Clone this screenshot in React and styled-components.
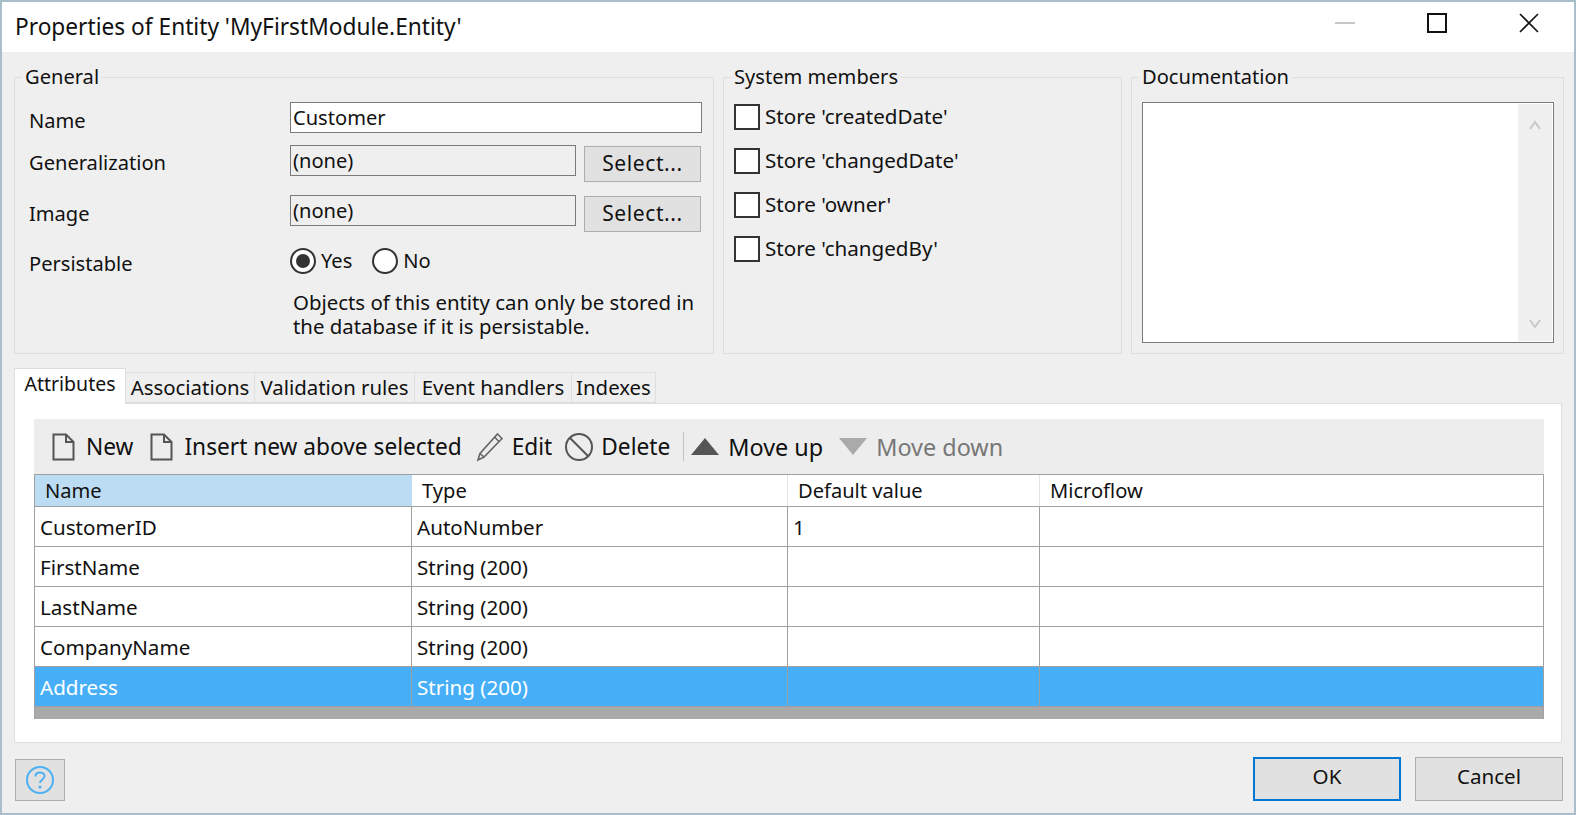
import React from 'react';
import styled, { createGlobalStyle } from 'styled-components';

const Global = createGlobalStyle`
  html, body { margin: 0; padding: 0; background: #efefef; }
  * { box-sizing: border-box; }
`;
const FONT = `"Noto Sans", "Open Sans", sans-serif`;

const Window = styled.div`
  width: 1576px; height: 815px; overflow: hidden;
  border: 2px solid #a9bfcc;
  background: #efefef;
  font-family: ${FONT};
  font-size: 20.1px;
  color: #111;
  display: flex; flex-direction: column;
`;
const TitleBar = styled.header`
  height: 50px; flex: none; background: #fff;
  display: flex; align-items: center; padding-left: 13px;
`;
const Title = styled.h1`
  margin: 0; font-size: 22.7px; font-weight: 400; flex: 1; line-height: 46px;
`;
const WinButtons = styled.div`
  display: flex; align-items: center; padding-right: 35px; gap: 72px; margin-bottom: 8px;
  svg { display: block; }
`;
const Groups = styled.div`
  display: flex; gap: 9px; padding: 13px 10px 0 12px; height: 316px; flex: none;
`;
const Group = styled.fieldset`
  margin: 0; padding: 0; min-width: 0;
  width: ${p => p.$w}px; height: 289px; flex: none;
  border: 1px solid #dedede;
`;
const Legend = styled.legend`
  padding: 0 3px; margin-left: 7px; line-height: 23px; height: 24px;
`;
const FormBody = styled.div`padding: 13px 0 0 14px;`;
const Row = styled.div`
  display: flex; align-items: flex-start; height: ${p => p.$h}px;
`;
const Label = styled.label`
  width: 261px; flex: none; line-height: 24px; padding-top: ${p => p.$top}px;
`;
const TextBox = styled.div`
  width: ${p => p.$w}px; height: 31px; flex: none;
  border: 1px solid #7a7a7a;
  background: ${p => (p.$readonly ? '#efefef' : '#fff')};
  padding-left: 2px; line-height: 29px;
`;
const SmallButton = styled.button`
  margin: 1px 0 0 8px; width: 117px; height: 36px; padding: 0 0 2px;
  border: 1px solid #adadad; background: #e1e1e1;
  font: inherit; font-size: 21px; letter-spacing: 0.6px; color: inherit;
`;
const RadioRow = styled.div`display: flex; align-items: center; height: 26px; line-height: 22px;`;
const RadioCircle = styled.span`
  width: 26px; height: 26px; flex: none; border-radius: 50%;
  border: 2px solid #333; background: #fff;
  display: flex; align-items: center; justify-content: center;
  &::after {
    content: ''; width: 14px; height: 14px; border-radius: 50%;
    background: ${p => (p.$on ? '#333' : 'transparent')};
  }
`;
const RadioText = styled.span`margin: 0 ${p => p.$after}px 0 5px;`;
const Help = styled.p`
  margin: 16px 0 0 264px; line-height: 24px; width: 420px; font-size: 20.4px;
`;
const CheckList = styled.div`
  display: flex; flex-direction: column; gap: 18px; padding: 15px 0 0 10px; font-size: 20.6px;
`;
const CheckRow = styled.div`display: flex; align-items: center; height: 26px; gap: 5px; line-height: 22px;`;
const CheckLabel = styled.span`padding-bottom: 3px;`;
const CheckBox = styled.span`
  width: 26px; height: 26px; flex: none; border: 2px solid #333; background: #fff;
`;
const DocBox = styled.div`
  margin: 13px 0 0 10px; width: 412px; height: 241px;
  border: 1px solid #7a7a7a; background: #fff;
  display: flex; justify-content: flex-end; padding: 1px;
`;
const ScrollTrack = styled.div`
  width: 34px; background: #f0f0f0;
  display: flex; flex-direction: column; justify-content: space-between; align-items: center;
  padding: 16px 0 12px;
`;
const TabStrip = styled.div`
  display: flex; align-items: flex-end; margin: 0 0 0 12px; height: 35px; flex: none;
  position: relative; z-index: 1; font-size: 20.6px;
`;
const Tab = styled.div`
  width: ${p => p.$w}px; flex: none;
  height: ${p => (p.$active ? 36 : 31)}px;
  margin-bottom: ${p => (p.$active ? -1 : 0)}px;
  background: ${p => (p.$active ? '#fff' : '#efefef')};
  border: 1px solid #dedede;
  border-left-width: ${p => (p.$active ? 1 : 0)}px;
  border-bottom-width: ${p => (p.$active ? 0 : 1)}px;
  text-align: center; line-height: 29px;
  font-size: ${p => (p.$active ? 19.5 : 20.4)}px;
  white-space: nowrap;
`;
const Panel = styled.section`
  margin: 0 0 0 12px; width: 1548px; height: 340px; flex: none;
  background: #fff; border: 1px solid #dedede;
  padding: 15px 17px 0 19px;
`;
const Toolbar = styled.div`
  height: 55px; background: #ededed; display: flex; align-items: center;
  font-size: 22.7px; padding-left: 18px;
  svg { display: block; flex: none; }
`;
const ToolItem = styled.div`
  display: flex; align-items: center; gap: ${p => p.$gap ?? 11}px;
  margin-right: ${p => p.$after ?? 14}px; white-space: nowrap;
  font-size: ${p => p.$size ?? 22.7}px;
  color: ${p => (p.$disabled ? '#777' : '#111')};
`;
const ToolSep = styled.span`width: 1px; height: 29px; background: #c4c4c4; margin-right: 7px;`;
const Table = styled.div`
  width: 1510px; border-top: 1px solid #a0a0a0; border-left: 1px solid #a0a0a0; border-right: 1px solid #a0a0a0;
  background: #a9a9a9; height: 245px; font-size: 20.6px;
`;
const HeaderRow = styled.div`display: flex; height: 32px; background: #fff; border-bottom: 1px solid #a0a0a0; font-size: 20.1px;`;
const HeaderCell = styled.div`
  width: ${p => p.$w}px; flex: none; padding-left: 10px; line-height: 32px;
  background: ${p => (p.$sorted ? '#bcdcf3' : 'transparent')};
  border-right: 1px solid ${p => (p.$sorted ? 'transparent' : '#e5e5e5')};
  &:last-child { border-right: none; }
`;
const DataRow = styled.div`
  display: flex; height: 40px;
  background: ${p => (p.$selected ? '#47aff8' : '#fff')};
  color: ${p => (p.$selected ? '#fff' : '#111')};
  border-bottom: 1px solid #a0a0a0;
`;
const Cell = styled.div`
  width: ${p => p.$w}px; flex: none; padding-left: 5px; line-height: 41px;
  border-right: 1px solid #a0a0a0;
  &:last-child { border-right: none; }
`;
const Footer = styled.footer`
  flex: 1; display: flex; align-items: flex-start; padding: 14px 11px 0 13px; font-size: 20.6px;
`;
const HelpButton = styled.button`
  width: 50px; height: 42px; margin-top: 2px; padding: 0;
  border: 1px solid #adadad; background: #e1e1e1;
  display: flex; align-items: center; justify-content: center;
`;
const Spacer = styled.div`flex: 1;`;
const DialogButton = styled.button`
  width: 148px; height: 44px; padding: 0 0 6px; margin-left: ${p => p.$ml}px;
  background: #e1e1e1; font: inherit; color: inherit;
  border: ${p => (p.$default ? '2px solid #0078d7' : '1px solid #adadad')};
`;

const COLS = [377, 376, 252, 503];
const ROWS = [
  ['CustomerID', 'AutoNumber', '1', ''],
  ['FirstName', 'String (200)', '', ''],
  ['LastName', 'String (200)', '', ''],
  ['CompanyName', 'String (200)', '', ''],
  ['Address', 'String (200)', '', ''],
];
const TABS = [['Attributes', 112], ['Associations', 129], ['Validation rules', 160], ['Event handlers', 157], ['Indexes', 84]];

const DocIcon = () => (
  <svg width="23" height="28" viewBox="0 0 23 28" fill="none" stroke="#555" strokeWidth="2">
    <path d="M1.5 1.5H14L21.5 9V26.5H1.5Z" />
    <path d="M14 1.5V9H21.5" />
  </svg>
);
const PenIcon = () => (
  <svg width="28" height="30" viewBox="0 0 28 30" fill="none" stroke="#666" strokeWidth="1.6">
    <path d="M21.5 2L26 6.5L8 25L2 28L4 21.5Z" />
    <path d="M4 21.5L8 25M18.5 5L23 9.5" />
  </svg>
);
const BanIcon = () => (
  <svg width="28" height="28" viewBox="0 0 28 28" fill="none" stroke="#555" strokeWidth="2">
    <circle cx="14" cy="14" r="13" />
    <path d="M5 5L23 23" />
  </svg>
);
const TriUp = () => (
  <svg width="28" height="17" viewBox="0 0 28 17"><path d="M14 0L28 17H0Z" fill="#555" /></svg>
);
const TriDown = () => (
  <svg width="28" height="17" viewBox="0 0 28 17"><path d="M0 0H28L14 17Z" fill="#aaa" /></svg>
);
const Chevron = ({ down }) => (
  <svg width="12" height="10" viewBox="0 0 12 10" fill="none" stroke="#c8c8c8" strokeWidth="2">
    <path d={down ? 'M1 1L6 8L11 1' : 'M1 9L6 2L11 9'} />
  </svg>
);

export default function App() {
  return (
    <>
      <Global />
      <Window>
        <TitleBar>
          <Title>Properties of Entity 'MyFirstModule.Entity'</Title>
          <WinButtons>
            <svg width="20" height="20" viewBox="0 0 20 20"><path d="M0 10H20" stroke="#c8c8c8" strokeWidth="2" /></svg>
            <svg width="20" height="20" viewBox="0 0 20 20"><rect x="1" y="1" width="18" height="18" fill="none" stroke="#111" strokeWidth="2" /></svg>
            <svg width="20" height="20" viewBox="0 0 20 20"><path d="M1 1L19 19M19 1L1 19" stroke="#111" strokeWidth="1.6" /></svg>
          </WinButtons>
        </TitleBar>

        <Groups>
          <Group $w={700}>
            <Legend>General</Legend>
            <FormBody>
              <Row $h={43}>
                <Label $top={7}>Name</Label>
                <TextBox $w={412}>Customer</TextBox>
              </Row>
              <Row $h={50}>
                <Label $top={6}>Generalization</Label>
                <TextBox $w={286} $readonly>(none)</TextBox>
                <SmallButton>Select...</SmallButton>
              </Row>
              <Row $h={53}>
                <Label $top={7}>Image</Label>
                <TextBox $w={286} $readonly>(none)</TextBox>
                <SmallButton>Select...</SmallButton>
              </Row>
              <Row $h={26}>
                <Label $top={4}>Persistable</Label>
                <RadioRow>
                  <RadioCircle $on />
                  <RadioText $after={20}>Yes</RadioText>
                  <RadioCircle />
                  <RadioText $after={0}>No</RadioText>
                </RadioRow>
              </Row>
              <Help>Objects of this entity can only be stored in the database if it is persistable.</Help>
            </FormBody>
          </Group>

          <Group $w={399}>
            <Legend>System members</Legend>
            <CheckList>
              {["createdDate", "changedDate", "owner", "changedBy"].map(n => (
                <CheckRow key={n}><CheckBox /><CheckLabel>Store '{n}'</CheckLabel></CheckRow>
              ))}
            </CheckList>
          </Group>

          <Group $w={433}>
            <Legend>Documentation</Legend>
            <DocBox>
              <ScrollTrack><Chevron /><Chevron down /></ScrollTrack>
            </DocBox>
          </Group>
        </Groups>

        <TabStrip>
          {TABS.map(([t, w], i) => <Tab key={t} $w={w} $active={i === 0}>{t}</Tab>)}
        </TabStrip>

        <Panel>
          <Toolbar>
            <ToolItem $after={17}><DocIcon />New</ToolItem>
            <ToolItem><DocIcon />Insert new above selected</ToolItem>
            <ToolItem $gap={8} $after={13}><PenIcon />Edit</ToolItem>
            <ToolItem $gap={8} $after={13}><BanIcon />Delete</ToolItem>
            <ToolSep />
            <ToolItem $gap={9} $after={16} $size={23.4}><TriUp />Move up</ToolItem>
            <ToolItem $gap={9} $size={23.4} $disabled><TriDown />Move down</ToolItem>
          </Toolbar>
          <Table>
            <HeaderRow>
              {['Name', 'Type', 'Default value', 'Microflow'].map((h, i) => (
                <HeaderCell key={h} $w={COLS[i]} $sorted={i === 0}>{h}</HeaderCell>
              ))}
            </HeaderRow>
            {ROWS.map((r, ri) => (
              <DataRow key={r[0]} $selected={ri === ROWS.length - 1}>
                {r.map((c, i) => <Cell key={i} $w={COLS[i]}>{c}</Cell>)}
              </DataRow>
            ))}
          </Table>
        </Panel>

        <Footer>
          <HelpButton aria-label="Help">
            <svg width="30" height="30" viewBox="0 0 30 30" fill="none" stroke="#4db0f5" strokeWidth="2">
              <circle cx="15" cy="15" r="13" />
              <path d="M10.5 11.5C10.5 9 12.5 7.5 15 7.5C17.5 7.5 19.5 9 19.5 11.3C19.5 14.5 15 14.5 15 18" />
              <circle cx="15" cy="22" r="1.6" fill="#4db0f5" stroke="none" />
            </svg>
          </HelpButton>
          <Spacer />
          <DialogButton $default>OK</DialogButton>
          <DialogButton $ml={14}>Cancel</DialogButton>
        </Footer>
      </Window>
    </>
  );
}
